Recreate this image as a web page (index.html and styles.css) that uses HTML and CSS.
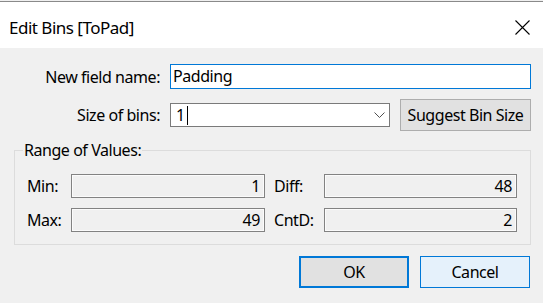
FILE: index.html
```html
<!DOCTYPE html>
<html>
<head>
<meta charset="utf-8">
<link rel="stylesheet" href="styles.css">
</head>
<body>
<div class="dialog">
  <div class="titlebar">
    <span class="title">Edit Bins [ToPad]</span>
    <svg class="close" width="15" height="15" viewBox="0 0 15 15"><path d="M0.5 0.5 L14.5 14.5 M14.5 0.5 L0.5 14.5" stroke="#000" stroke-width="1.1" fill="none"/></svg>
  </div>
  <div class="content">
    <div class="row row-name">
      <span class="label">New field name:</span>
      <div class="textbox focused">Padding</div>
    </div>
    <div class="row row-size">
      <span class="label">Size of bins:</span>
      <div class="combo"><span class="combo-text">1<span class="caret"></span></span>
        <svg class="chev" width="11" height="6" viewBox="0 0 11 6"><path d="M0.5 0.5 L5.5 5.5 L10.5 0.5" stroke="#505050" stroke-width="1" fill="none"/></svg>
      </div>
      <div class="btn suggest">Suggest Bin Size</div>
    </div>
    <fieldset class="group">
      <legend>Range of Values:</legend>
      <div class="grid">
        <span class="glabel">Min:</span><div class="ro">1</div>
        <span class="glabel gap">Diff:</span><div class="ro">48</div>
        <span class="glabel">Max:</span><div class="ro">49</div>
        <span class="glabel gap">CntD:</span><div class="ro">2</div>
      </div>
    </fieldset>
    <div class="actions">
      <div class="btn ok">OK</div>
      <div class="btn cancel">Cancel</div>
    </div>
  </div>
</div>
</body>
</html>
```
FILE: styles.css
```css
html, body {
  margin: 0;
  padding: 0;
  background: #f0f0f0;
}
body {
  font-family: "Noto Sans", "Open Sans", sans-serif;
  font-size: 16px;
  letter-spacing: -0.45px;
  color: #000;
  width: 543px;
  height: 303px;
  overflow: hidden;
}
.dialog {
  border-top: 1px solid #f0f0f0;
}
.titlebar {
  border-top: 1px solid #8a8a8a;
  background: #fff;
  height: 46px;
  display: flex;
  align-items: center;
  justify-content: space-between;
  padding: 0 13px 0 9px;
}
.title {
  font-size: 17px;
  letter-spacing: -0.5px;
  line-height: 20px;
  padding-top: 5px;
}
.close {
  display: block;
  margin-top: 4px;
}
.content {
  padding: 16px 12px 0 0;
}
.row {
  display: flex;
  align-items: center;
}
.label {
  width: 160px;
  text-align: right;
  margin-right: 10px;
  flex: none;
}
.textbox {
  flex: 1;
  height: 25px;
  box-sizing: border-box;
  border: 1px solid #0078d7;
  background: #fff;
  padding-left: 2px;
  line-height: 23px;
}
.row-size {
  margin-top: 10px;
}
.combo {
  width: 220px;
  height: 24px;
  box-sizing: border-box;
  border: 1px solid #7a7a7a;
  background: #fff;
  display: flex;
  align-items: center;
  justify-content: space-between;
  padding: 0 4px 0 5px;
  flex: none;
}
.combo-text {
  display: flex;
  align-items: center;
  line-height: 22px;
}
.caret {
  display: inline-block;
  width: 1px;
  height: 19px;
  background: #000;
  margin-left: 2px;
}
.chev {
  display: block;
}
.btn {
  box-sizing: border-box;
  height: 32px;
  display: flex;
  align-items: center;
  justify-content: center;
  background: #e1e1e1;
  border: 1px solid #adadad;
}
.suggest {
  margin-left: 10px;
  flex: 1;
}
.group {
  margin: 7px 0 0 14px;
  border: 1px solid #dcdcdc;
  padding: 12px 12px 12px 12px;
  min-width: 0;
}
.group legend {
  padding: 0 1px;
  margin-left: -4px;
  line-height: 24px;
}
.grid {
  display: grid;
  grid-template-columns: 44px 194px 59px 193px;
  row-gap: 10px;
  align-items: center;
}
.glabel.gap {
  margin-left: 9px;
}
.ro {
  height: 24px;
  box-sizing: border-box;
  border: 1px solid #828282;
  box-shadow: inset 0 0 0 1px #fbfbfb;
  text-align: right;
  padding-right: 4px;
  line-height: 22px;
}
.actions {
  display: flex;
  justify-content: flex-end;
  gap: 11px;
  margin-top: 11px;
  padding-right: 1px;
}
.ok, .cancel {
  width: 110px;
}
.ok {
  border: 2px solid #0078d7;
}
.cancel {
  border: 1px solid #0078d7;
  background: #e5f1fb;
}
```
